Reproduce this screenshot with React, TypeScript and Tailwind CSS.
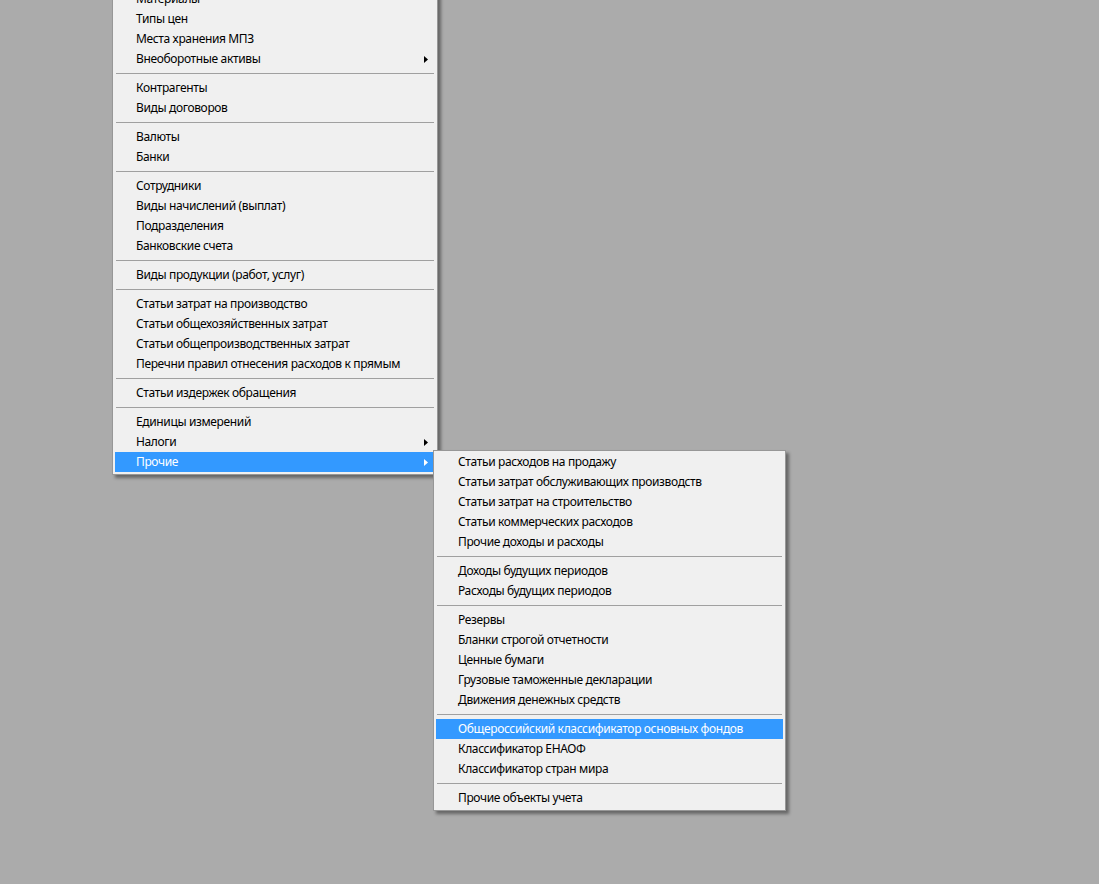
import React from "react";

type Row = { label?: string; sep?: boolean; arrow?: boolean; active?: boolean };

// Main menu (its top is cut off by the window)
const mainMenu: Row[] = [
  { label: "Материалы" },
  { label: "Типы цен" },
  { label: "Места хранения МПЗ" },
  { label: "Внеоборотные активы", arrow: true },
  { sep: true },
  { label: "Контрагенты" },
  { label: "Виды договоров" },
  { sep: true },
  { label: "Валюты" },
  { label: "Банки" },
  { sep: true },
  { label: "Сотрудники" },
  { label: "Виды начислений (выплат)" },
  { label: "Подразделения" },
  { label: "Банковские счета" },
  { sep: true },
  { label: "Виды продукции (работ, услуг)" },
  { sep: true },
  { label: "Статьи затрат на производство" },
  { label: "Статьи общехозяйственных затрат" },
  { label: "Статьи общепроизводственных затрат" },
  { label: "Перечни правил отнесения расходов к прямым" },
  { sep: true },
  { label: "Статьи издержек обращения" },
  { sep: true },
  { label: "Единицы измерений" },
  { label: "Налоги", arrow: true },
  { label: "Прочие", arrow: true, active: true },
];

const subMenu: Row[] = [
  { label: "Статьи расходов на продажу" },
  { label: "Статьи затрат обслуживающих производств" },
  { label: "Статьи затрат на строительство" },
  { label: "Статьи коммерческих расходов" },
  { label: "Прочие доходы и расходы" },
  { sep: true },
  { label: "Доходы будущих периодов" },
  { label: "Расходы будущих периодов" },
  { sep: true },
  { label: "Резервы" },
  { label: "Бланки строгой отчетности" },
  { label: "Ценные бумаги" },
  { label: "Грузовые таможенные декларации" },
  { label: "Движения денежных средств" },
  { sep: true },
  { label: "Общероссийский классификатор основных фондов", active: true },
  { label: "Классификатор ЕНАОФ" },
  { label: "Классификатор стран мира" },
  { sep: true },
  { label: "Прочие объекты учета" },
];

function Arrow({ white }: { white?: boolean }) {
  return (
    <svg width="4" height="7" viewBox="0 0 4 7" className="shrink-0">
      <path d="M0 0 L4 3.5 L0 7 Z" fill={white ? "#ffffff" : "#000000"} />
    </svg>
  );
}

function MenuList({ rows, indent }: { rows: Row[]; indent: string }) {
  return (
    <div className="flex flex-col">
      {rows.map((row, i) =>
        row.sep ? (
          <div key={i} className="h-[9px] flex items-center px-[1px]">
            <div className="h-px w-full bg-[#a0a0a0]" />
          </div>
        ) : (
          <div
            key={i}
            className={`h-5 flex items-center justify-between ${indent} pr-[7px] whitespace-nowrap ${
              row.active ? "bg-[#3399ff] text-white" : "text-[#000000]"
            }`}
          >
            <span>{row.label}</span>
            {row.arrow && <Arrow white={row.active} />}
          </div>
        )
      )}
    </div>
  );
}

export default function App() {
  return (
    <div
      className="relative w-[1099px] h-[884px] overflow-hidden bg-[#ababab] text-[12px] leading-5 tracking-[-0.36px]"
      style={{ fontFamily: '"Noto Sans", "Open Sans", sans-serif' }}
    >
      {/* Main popup menu */}
      <div className="absolute left-[112px] top-[-14px] w-[326px] bg-[#f0f0f0] border border-[#979797] p-[2px] shadow-[3px_3px_3px_rgba(0,0,0,0.4)]">
        <MenuList rows={mainMenu} indent="pl-[21px]" />
      </div>

      {/* Submenu "Прочие" */}
      <div className="absolute left-[433px] top-[450px] w-[353px] bg-[#f0f0f0] border border-[#979797] pt-px pb-[2px] px-[2px] shadow-[3px_3px_3px_rgba(0,0,0,0.4)]">
        <MenuList rows={subMenu} indent="pl-[22px]" />
      </div>
    </div>
  );
}
